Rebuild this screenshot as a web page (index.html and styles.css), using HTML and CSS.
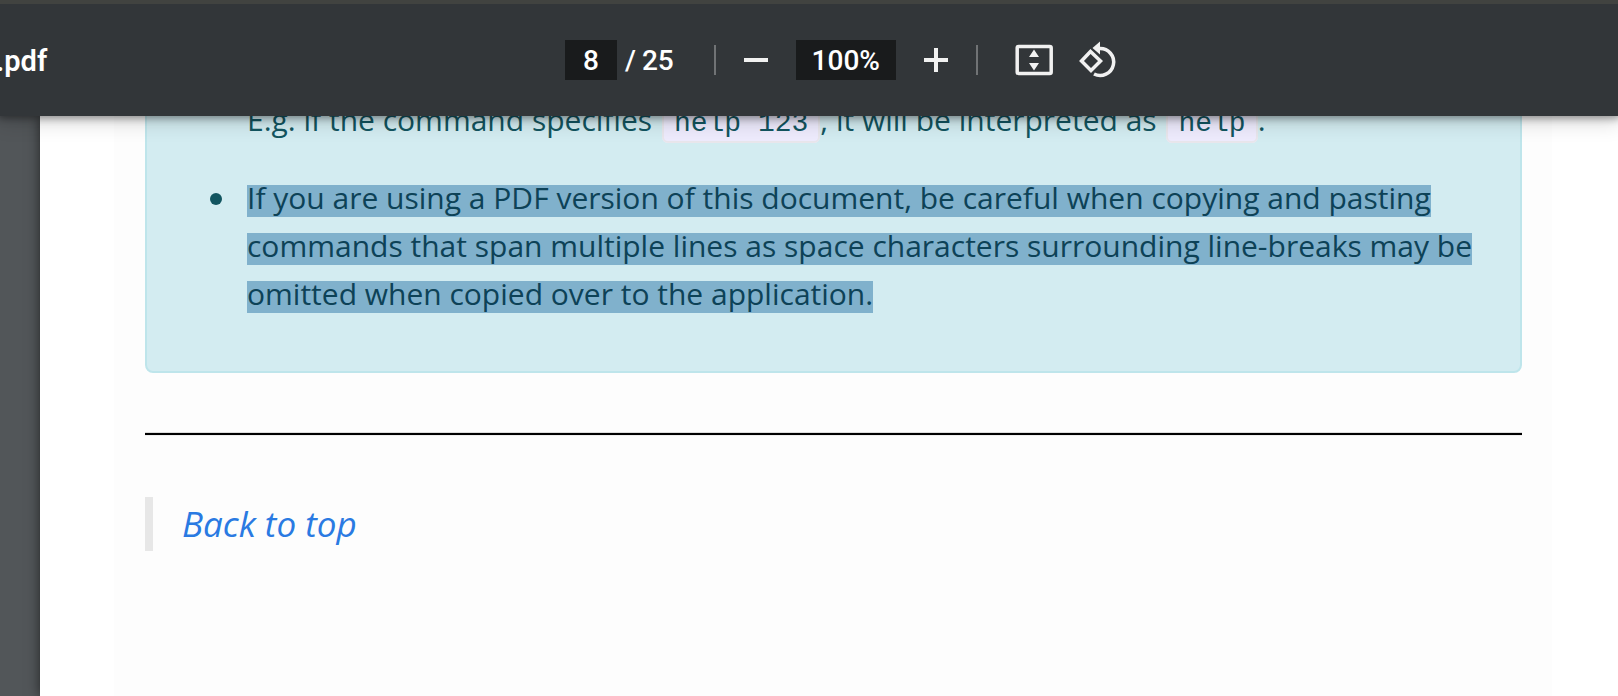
FILE: index.html
```
<!DOCTYPE html>
<html lang="en">
<head>
<meta charset="utf-8">
<title>PDF viewer</title>
<meta name="viewport" content="width=device-width, initial-scale=1">
<link rel="stylesheet" href="styles.css">
</head>
<body>
<header class="toolbar">
  <div class="title"><span>.pdf</span></div>
  <div class="controls">
    <input class="field page-field" type="text" value="8" aria-label="Page number">
    <span class="count">/</span>
    <span class="count total">25</span>
    <span class="divider"></span>
    <button class="tool" type="button" aria-label="Zoom out">
      <svg width="40" height="40" viewBox="0 0 40 40"><path d="M8 18h24v4H8z"/></svg>
    </button>
    <input class="field zoom-field" type="text" value="100%" aria-label="Zoom level">
    <button class="tool" type="button" aria-label="Zoom in">
      <svg width="40" height="40" viewBox="0 0 40 40"><path d="M8 18h10V8h4v10h10v4H22v10h-4V22H8z"/></svg>
    </button>
    <span class="divider"></span>
    <button class="tool fit" type="button" aria-label="Fit to page">
      <svg width="40" height="40" viewBox="0 0 40 40"><rect class="line" x="3.200" y="6.500" width="34" height="27" rx="1.500"/><path d="M20 9.500l5 7.500H15zM20 30.500l5-7.500H15z"/></svg>
    </button>
    <button class="tool rotate" type="button" aria-label="Rotate counterclockwise">
      <svg width="40" height="40" viewBox="0 0 40 40"><path class="line" d="M12.500 11.500L3.500 21l9.500 9.500 9.500-9.500z"/><path class="line" d="M21.500 8.500a13.500 13.500 0 1 1-5.500 25.500"/><path d="M22 1.500v13L14.500 8z"/></svg>
    </button>
  </div>
</header>
<main class="viewer">
  <article class="sheet">
    <div class="content">
      <section class="alert">
        <ul class="notes">
          <li class="continued">E.g. if the command specifies <code>help 123</code>, it will be interpreted as <code>help</code>.</li>
          <li class="note"><span class="bullet"></span><p class="text"><mark>If you are using a PDF version of this document, be careful when copying and pasting commands that span multiple lines as space characters surrounding line-breaks may be omitted when copied over to the application.</mark></p></li>
        </ul>
      </section>
      <hr class="rule">
      <blockquote class="back"><a href="#">Back to top</a></blockquote>
    </div>
  </article>
</main>
</body>
</html>
```
FILE: styles.css
```
* { box-sizing: border-box; }
body {
  margin: 0;
  height: 100vh;
  display: flex;
  flex-direction: column;
  overflow: hidden;
  font-family: "Open Sans", "Noto Sans", sans-serif;
  background: #525659;
}
.toolbar {
  position: relative;
  z-index: 1;
  flex: none;
  display: flex;
  align-items: center;
  height: 116px;
  border-top: 4px solid #414340;
  background: #323639;
  box-shadow: 0 0 8px 2px rgba(0, 0, 0, .4), 0 4px 20px 2px rgba(0, 0, 0, .16);
  color: #fff;
  font: 500 28px/40px Roboto, sans-serif;
}
.title {
  flex: 0 0 565px;
  overflow: hidden;
}
.title span { display: block; margin-left: -4px; padding-top: 2px; font-size: 29px; font-weight: 600; }
.controls { display: flex; align-items: center; }
.field {
  height: 40px;
  padding: 2px 0 0;
  border: 0;
  background: #191b1c;
  color: #fff;
  font: inherit;
  text-align: center;
}
.page-field { width: 52px; }
.zoom-field { width: 100px; margin: 0 20px; }
.count { margin-left: 8px; padding-top: 2px; }
.divider { width: 2px; height: 30px; background: #707375; }
.total { margin-left: 6px; margin-right: 40px; }
.tool {
  width: 40px;
  height: 40px;
  padding: 0;
  border: 0;
  background: none;
}
.divider + .tool { margin-left: 20px; }
.tool + .divider { margin-left: 20px; }
.divider + .fit { margin-left: 36px; }
.rotate { margin-left: 24px; }
.tool svg { display: block; fill: #f1f1f1; }
.tool .line { fill: none; stroke: #f1f1f1; stroke-width: 3.500; }
.viewer {
  flex: 1;
  overflow: hidden;
  padding-left: 40px;
}
.sheet {
  height: 100%;
  padding: 0 66px 0 74px;
  background: #fff;
  box-shadow: 0 0 12px rgba(0, 0, 0, .6);
}
.content {
  display: flow-root;
  height: 100%;
  padding: 0 30px 0 31px;
  background: #fdfdfd;
}
.alert {
  margin-top: -60px;
  padding: 38px 40px 53px 62px;
  border: 2px solid #bee5eb;
  border-radius: 8px;
  background: #d3ecf1;
  color: #125560;
  font-size: 30px;
  line-height: 48px;
}
.notes { margin: 0; padding: 0; list-style: none; }
.continued { padding-left: 38px; white-space: nowrap; }
.continued code {
  margin-left: 2px;
  padding: 4px 10px 2px;
  border: 2px solid #e8e6ec;
  border-radius: 6px;
  background: #eeebfd;
  font: 28px/40px "Liberation Mono", monospace;
}
.note { display: flex; margin-top: 30px; }
.bullet {
  flex: none;
  width: 12px;
  height: 12px;
  margin: 19px 25px 0 1px;
  border-radius: 50%;
  background: #125560;
}
.text { margin: 0; }
mark {
  padding-top: 8px;
  color: #0d4257;
  background: linear-gradient(#80b1cc, #80b1cc) left bottom 1px / 100% 32px no-repeat;
  -webkit-box-decoration-break: clone;
  box-decoration-break: clone;
}
.rule {
  height: 4px;
  margin: 59px 0 61px;
  border: 0;
  border-top: 1px solid #ddd;
  border-bottom: 1px solid #eee;
  background: #000;
}
.back {
  margin: 0;
  padding-left: 29px;
  border-left: 8px solid #e7e7e7;
  font-size: 35px;
  line-height: 54px;
  font-style: italic;
}
.back a { color: #2a7ae2; text-decoration: none; }
```
